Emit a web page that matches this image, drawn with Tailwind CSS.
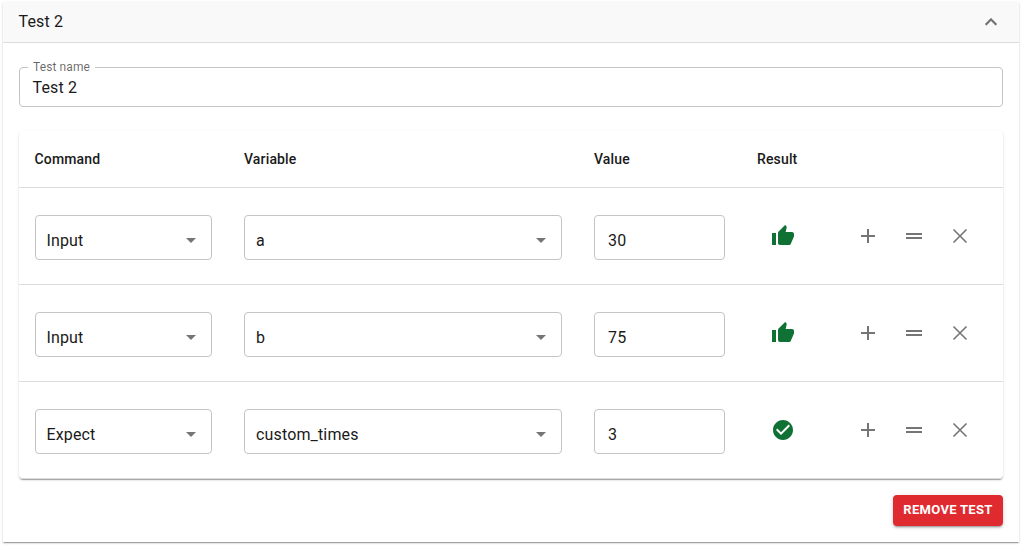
<!DOCTYPE html>
<html lang="en">
<head>
<meta charset="utf-8">
<title>Test 2</title>
<script src="https://cdn.jsdelivr.net/npm/@tailwindcss/browser@4"></script>
</head>
<body class="h-[545px] bg-white pt-0.5 pl-[3px] font-[Roboto,sans-serif] text-base text-[#1a1a1a] antialiased">
<svg class="hidden">
  <symbol id="arrow" viewBox="0 0 24 24"><path d="M7 10l5 5 5-5z"/></symbol>
  <symbol id="thumb" viewBox="0 0 24 24"><path d="M1 21h4V9H1v12zm22-11c0-1.1-.9-2-2-2h-6.31l.95-4.57.03-.32c0-.41-.17-.79-.44-1.06L14.17 1 7.59 7.59C7.22 7.95 7 8.45 7 9v10c0 1.1.9 2 2 2h9c.83 0 1.54-.5 1.84-1.22l3.02-7.05c.09-.23.14-.47.14-.73v-2z"/></symbol>
  <symbol id="check" viewBox="0 0 24 24"><path d="M12 2C6.48 2 2 6.48 2 12s4.48 10 10 10 10-4.48 10-10S17.52 2 12 2zm-2 15l-5-5 1.41-1.41L10 14.17l7.59-7.59L19 8l-9 9z"/></symbol>
  <symbol id="add" viewBox="0 0 24 24"><path d="M19 13h-6v6h-2v-6H5v-2h6V5h2v6h6v2z"/></symbol>
  <symbol id="drag" viewBox="0 0 24 24"><path d="M20 9H4v2h16V9zM4 15h16v-2H4v2z"/></symbol>
  <symbol id="close" viewBox="0 0 24 24"><path d="M5.5 5.5l13 13M18.5 5.5l-13 13" fill="none"/></symbol>
</svg>
<main class="h-[540px] w-[1016px] bg-white shadow-[0_2px_1px_-1px_rgba(0,0,0,0.2),0_1px_1px_rgba(0,0,0,0.14),0_1px_3px_rgba(0,0,0,0.12)]">
  <header class="flex h-[41px] items-center justify-between border-b border-[#dcdcdc] bg-[#f9f9f9] pl-[15.5px] pr-4 pb-px">
    <h1 class="tracking-[0.15px]">Test 2</h1>
    <svg class="size-6 fill-black/54 stroke-black/20 stroke-[0.5]" viewBox="0 0 24 24"><path d="M12 8l-6 6 1.41 1.41L12 10.83l4.59 4.58L18 14z"/></svg>
  </header>
  <div class="px-4 pt-6">
    <label class="relative flex h-10 items-center rounded-sm border border-[#c4c4c4] pl-[12.5px]">
      <span class="absolute -top-[7px] left-2 bg-white px-[5px] text-xs leading-3 tracking-[0.11px] text-black/60">Test name</span>
      <span class="pt-0.5 tracking-[0.15px]">Test 2</span>
    </label>
    <section class="mt-6 rounded-sm bg-white shadow-[0_2px_1px_-1px_rgba(0,0,0,0.2),0_1px_1px_rgba(0,0,0,0.14),0_1px_3px_rgba(0,0,0,0.12)]">
      <div class="grid h-[57px] grid-cols-[177px_318px_131px_61px_1fr] items-center gap-x-8 border-b border-[#dcdcdc] px-4 text-sm font-medium tracking-[0.15px]">
        <div class="-ml-[0.5px]">Command</div><div>Variable</div><div>Value</div><div>Result</div><div></div>
      </div>

      <div class="grid h-[97px] grid-cols-[177px_318px_131px_52px_1fr] gap-x-8 border-b border-[#dcdcdc] px-4 pt-[27px]">
        <div class="flex h-[45px] items-center justify-between rounded-sm border border-[#c4c4c4] pl-[10.5px] pr-2 pt-[5px]"><span class="pt-0.5 tracking-[0.15px]">Input</span><svg class="size-6 fill-black/54"><use href="#arrow"/></svg></div>
        <div class="flex h-[45px] items-center justify-between rounded-sm border border-[#c4c4c4] pl-[11px] pr-2 pt-[5px]"><span class="pt-0.5 tracking-[0.15px]">a</span><svg class="size-6 fill-black/54"><use href="#arrow"/></svg></div>
        <div class="flex h-[45px] items-center rounded-sm border border-[#c4c4c4] pl-[13px] pt-[5px]"><span class="pt-0.5 tracking-[0.15px]">30</span></div>
        <div class="flex h-[42px] items-center justify-center"><svg class="size-6 fill-[#0f7133]"><use href="#thumb"/></svg></div>
        <div class="flex h-[42px] items-center gap-[22px] pl-[15px]"><svg class="size-6 fill-black/54"><use href="#add"/></svg><svg class="size-6 fill-black/54"><use href="#drag"/></svg><svg class="size-6 stroke-black/54 stroke-[1.6]"><use href="#close"/></svg></div>
      </div>

      <div class="grid h-[97px] grid-cols-[177px_318px_131px_52px_1fr] gap-x-8 border-b border-[#dcdcdc] px-4 pt-[27px]">
        <div class="flex h-[45px] items-center justify-between rounded-sm border border-[#c4c4c4] pl-[10.5px] pr-2 pt-[5px]"><span class="pt-0.5 tracking-[0.15px]">Input</span><svg class="size-6 fill-black/54"><use href="#arrow"/></svg></div>
        <div class="flex h-[45px] items-center justify-between rounded-sm border border-[#c4c4c4] pl-[11px] pr-2 pt-[5px]"><span class="pt-0.5 tracking-[0.15px]">b</span><svg class="size-6 fill-black/54"><use href="#arrow"/></svg></div>
        <div class="flex h-[45px] items-center rounded-sm border border-[#c4c4c4] pl-[13px] pt-[5px]"><span class="pt-0.5 tracking-[0.15px]">75</span></div>
        <div class="flex h-[42px] items-center justify-center"><svg class="size-6 fill-[#0f7133]"><use href="#thumb"/></svg></div>
        <div class="flex h-[42px] items-center gap-[22px] pl-[15px]"><svg class="size-6 fill-black/54"><use href="#add"/></svg><svg class="size-6 fill-black/54"><use href="#drag"/></svg><svg class="size-6 stroke-black/54 stroke-[1.6]"><use href="#close"/></svg></div>
      </div>

      <div class="grid h-[97px] grid-cols-[177px_318px_131px_52px_1fr] gap-x-8 rounded-b-sm border-b border-[#dcdcdc] px-4 pt-[27px]">
        <div class="flex h-[45px] items-center justify-between rounded-sm border border-[#c4c4c4] pl-[10.5px] pr-2 pt-[5px]"><span class="pt-0.5 tracking-[0.15px]">Expect</span><svg class="size-6 fill-black/54"><use href="#arrow"/></svg></div>
        <div class="flex h-[45px] items-center justify-between rounded-sm border border-[#c4c4c4] pl-[11px] pr-2 pt-[5px]"><span class="pt-0.5 tracking-[0.15px]">custom_times</span><svg class="size-6 fill-black/54"><use href="#arrow"/></svg></div>
        <div class="flex h-[45px] items-center rounded-sm border border-[#c4c4c4] pl-[13px] pt-[5px]"><span class="pt-0.5 tracking-[0.15px]">3</span></div>
        <div class="flex h-[42px] items-center justify-center"><svg class="size-6 fill-[#0f7133]"><use href="#check"/></svg></div>
        <div class="flex h-[42px] items-center gap-[22px] pl-[15px]"><svg class="size-6 fill-black/54"><use href="#add"/></svg><svg class="size-6 fill-black/54"><use href="#drag"/></svg><svg class="size-6 stroke-black/54 stroke-[1.6]"><use href="#close"/></svg></div>
      </div>
    </section>
    <div class="mt-4 flex justify-end">
      <button class="flex h-[31px] w-[110px] items-center justify-center rounded-sm bg-[#df2b2f] pb-[2px] text-[13px] font-bold tracking-[0.3px] whitespace-nowrap text-white shadow-[0_3px_1px_-2px_rgba(0,0,0,0.2),0_2px_2px_rgba(0,0,0,0.14),0_1px_5px_rgba(0,0,0,0.12)]">REMOVE TEST</button>
    </div>
  </div>
</main>
</body>
</html>
